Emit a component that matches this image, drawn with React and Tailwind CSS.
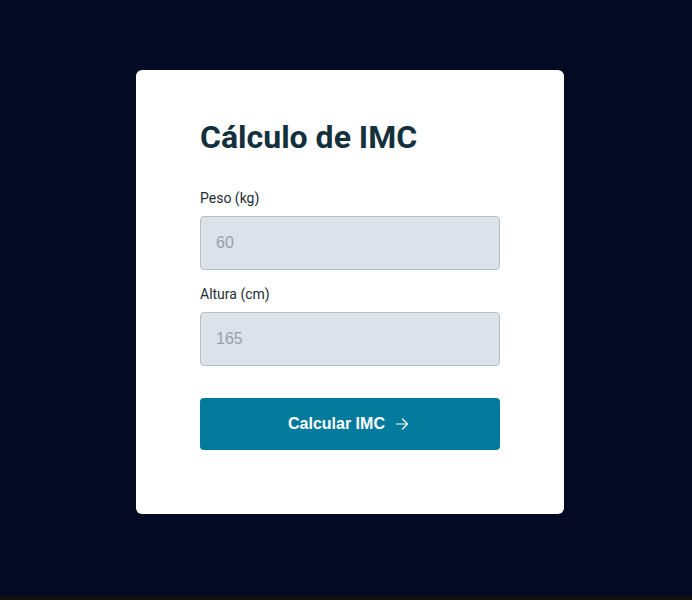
import React from 'react';

const Field = ({ label, placeholder, className = '' }) => (
    <div className={className}>
        <label className="block text-[14px] leading-5 text-[#1f2d36] mb-2">{label}</label>
        <input
            type="number"
            placeholder={placeholder}
            className="w-full h-[54px] rounded-[4px] border border-[#b8bec6] bg-[#dce2ea] px-[15px] font-['Liberation_Sans',sans-serif] text-[16px] text-[#1f2d36] placeholder:text-[#9aa0a8] outline-none"
        />
    </div>
);

const App = () => {
    return (
        <div className="font-['Roboto',sans-serif]">
            <div className="h-[596px] bg-[#050a24] flex justify-center pl-2 pt-[70px]">
                <div className="w-[428px] h-[444px] bg-white rounded-[6px] px-16 pt-[47px] pb-16">
                    <h1 className="text-[32px] leading-10 font-bold text-[#12313d]">Cálculo de IMC</h1>
                    <Field label="Peso (kg)" placeholder="60" className="mt-[31px]" />
                    <Field label="Altura (cm)" placeholder="165" className="mt-[14px]" />
                    <button className="mt-8 w-full h-[52px] rounded-[4px] bg-[#047a9c] text-white font-['Liberation_Sans',sans-serif] text-[16px] font-bold flex items-center justify-center gap-[10px] pr-[3px]">
                        Calcular IMC
                        <svg width="14" height="14" viewBox="0 0 14 14" fill="none" stroke="currentColor" strokeWidth="1.2" strokeLinecap="round" strokeLinejoin="round">
                            <path d="M1.5 7h11M7.5 2l5 5-5 5" />
                        </svg>
                    </button>
                </div>
            </div>
            <div className="h-1 bg-[#111210]" />
        </div>
    );
};

export default App;
